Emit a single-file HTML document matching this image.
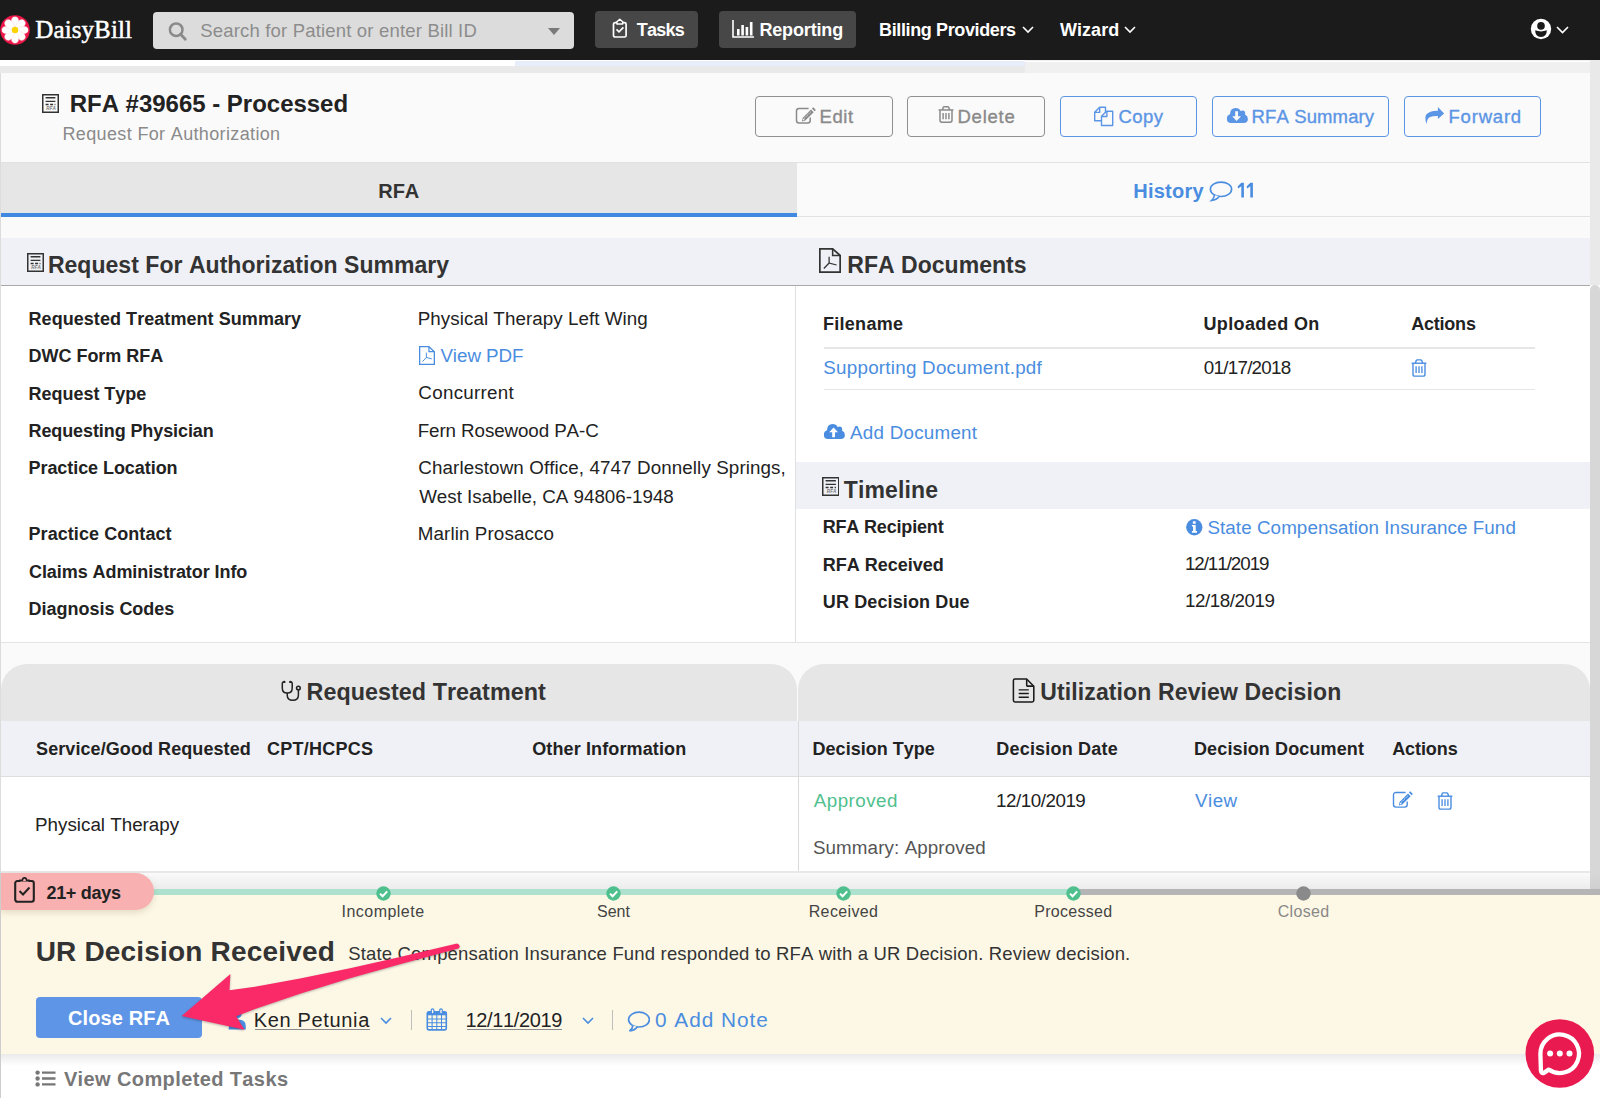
<!DOCTYPE html>
<html><head><meta charset="utf-8"><style>
html,body{margin:0;padding:0;}
body{width:1600px;height:1098px;position:relative;overflow:hidden;background:#fafafa;font-family:"Liberation Sans",sans-serif;font-kerning:none;}
.t{position:absolute;white-space:nowrap;}
.r{position:absolute;display:block;}
</style></head><body>
<div class="r" style="left:0px;top:0px;width:1600px;height:60px;background:#1b1b1b;"></div>
<svg class="r" style="left:0.3px;top:15.3px;" width="30" height="30" viewBox="0 0 30 30"><circle cx="15" cy="15" r="14.8" fill="#ec1648"/><path d="M15 15 C10.2 10 9.8 1.8 15 1.8 C20.2 1.8 19.8 10 15 15 Z" fill="#fff" stroke="#f6c9d3" stroke-width="0.35" transform="rotate(0 15 15)"/><path d="M15 15 C10.2 10 9.8 1.8 15 1.8 C20.2 1.8 19.8 10 15 15 Z" fill="#fff" stroke="#f6c9d3" stroke-width="0.35" transform="rotate(45 15 15)"/><path d="M15 15 C10.2 10 9.8 1.8 15 1.8 C20.2 1.8 19.8 10 15 15 Z" fill="#fff" stroke="#f6c9d3" stroke-width="0.35" transform="rotate(90 15 15)"/><path d="M15 15 C10.2 10 9.8 1.8 15 1.8 C20.2 1.8 19.8 10 15 15 Z" fill="#fff" stroke="#f6c9d3" stroke-width="0.35" transform="rotate(135 15 15)"/><path d="M15 15 C10.2 10 9.8 1.8 15 1.8 C20.2 1.8 19.8 10 15 15 Z" fill="#fff" stroke="#f6c9d3" stroke-width="0.35" transform="rotate(180 15 15)"/><path d="M15 15 C10.2 10 9.8 1.8 15 1.8 C20.2 1.8 19.8 10 15 15 Z" fill="#fff" stroke="#f6c9d3" stroke-width="0.35" transform="rotate(225 15 15)"/><path d="M15 15 C10.2 10 9.8 1.8 15 1.8 C20.2 1.8 19.8 10 15 15 Z" fill="#fff" stroke="#f6c9d3" stroke-width="0.35" transform="rotate(270 15 15)"/><path d="M15 15 C10.2 10 9.8 1.8 15 1.8 C20.2 1.8 19.8 10 15 15 Z" fill="#fff" stroke="#f6c9d3" stroke-width="0.35" transform="rotate(315 15 15)"/><circle cx="15" cy="15" r="3.2" fill="#fdd400"/></svg>
<div class="t" style="left:35.30px;top:17.00px;font-size:25px;line-height:25px;font-weight:normal;color:#fff;letter-spacing:0.100px;font-family:'Liberation Serif', serif;-webkit-text-stroke:0.5px #fff;">DaisyBill</div>
<div class="r" style="left:153px;top:12px;width:421px;height:37px;background:#dcdcdc;border-radius:4px;"></div>
<svg class="r" style="left:166px;top:19px;" width="24" height="24" viewBox="0 0 24 24"><circle cx="10.2" cy="10.7" r="6.3" fill="none" stroke="#8a8a8a" stroke-width="2.5"/><path d="M14.6 15.3 L19.3 20.2" stroke="#8a8a8a" stroke-width="2.8" stroke-linecap="round"/></svg>
<div class="t" style="left:200.20px;top:22.09px;font-size:18.5px;line-height:18.5px;font-weight:normal;color:#8c8c8c;letter-spacing:0.182px;font-family:'Liberation Sans', sans-serif;">Search for Patient or enter Bill ID</div>
<svg class="r" style="left:548px;top:28px;" width="12" height="7" viewBox="0 0 12 7"><path d="M0 0 H12 L6 7 Z" fill="#7a7a7a"/></svg>
<div class="r" style="left:595px;top:11px;width:103px;height:37px;background:#474747;border-radius:4px;"></div>
<svg class="r" style="left:612px;top:18px;" width="16" height="20" viewBox="0 0 16 20"><rect x="1.5" y="4.6" width="12.6" height="14.4" rx="1.6" fill="none" stroke="#fff" stroke-width="1.7"/><path d="M4.9 6 V3.8 L7.8 1.2 L10.7 3.8 V6 Z" fill="#474747" stroke="#fff" stroke-width="1.5" stroke-linejoin="round"/><path d="M4.5 11.4 L7 13.9 L11.4 9.3" fill="none" stroke="#fff" stroke-width="1.7"/></svg>
<div class="t" style="left:636.80px;top:20.51px;font-size:18px;line-height:18px;font-weight:bold;color:#fff;letter-spacing:-0.775px;font-family:'Liberation Sans', sans-serif;">Tasks</div>
<div class="r" style="left:719px;top:11px;width:137px;height:37px;background:#474747;border-radius:4px;"></div>
<svg class="r" style="left:732px;top:20px;" width="23" height="18" viewBox="0 0 23 18"><path d="M1 0 V17 H22" fill="none" stroke="#fff" stroke-width="1.6"/><rect x="5" y="9" width="2.6" height="6.5" fill="#fff"/><rect x="9.3" y="5" width="2.6" height="10.5" fill="#fff"/><rect x="13.6" y="7" width="2.6" height="8.5" fill="#fff"/><rect x="17.9" y="2" width="2.6" height="13.5" fill="#fff"/></svg>
<div class="t" style="left:759.40px;top:20.51px;font-size:18px;line-height:18px;font-weight:bold;color:#fff;letter-spacing:-0.150px;font-family:'Liberation Sans', sans-serif;">Reporting</div>
<div class="t" style="left:879.10px;top:20.51px;font-size:18px;line-height:18px;font-weight:bold;color:#fff;letter-spacing:-0.381px;font-family:'Liberation Sans', sans-serif;">Billing Providers</div>
<svg class="r" style="left:1022px;top:26px;" width="12" height="8" viewBox="0 0 12 8"><path d="M1 1 L6 6 L11 1" fill="none" stroke="#fff" stroke-width="1.6"/></svg>
<div class="t" style="left:1060.00px;top:20.51px;font-size:18px;line-height:18px;font-weight:bold;color:#fff;letter-spacing:0.040px;font-family:'Liberation Sans', sans-serif;">Wizard</div>
<svg class="r" style="left:1124px;top:26px;" width="12" height="8" viewBox="0 0 12 8"><path d="M1 1 L6 6 L11 1" fill="none" stroke="#fff" stroke-width="1.6"/></svg>
<svg class="r" style="left:1530px;top:18px;" width="22" height="22" viewBox="0 0 22 22"><circle cx="11" cy="11" r="10.2" fill="#fff"/><circle cx="11" cy="7.9" r="3.8" fill="#1b1b1b"/><path d="M5.2 12.3 Q11 14.6 16.8 12.3 Q16.9 18.9 11 18.9 Q5.1 18.9 5.2 12.3 Z" fill="#1b1b1b"/></svg>
<svg class="r" style="left:1556px;top:26px;" width="13" height="8" viewBox="0 0 13 8"><path d="M1 1 L6.5 6.5 L12 1" fill="none" stroke="#fff" stroke-width="1.6"/></svg>
<div class="r" style="left:0px;top:60px;width:1600px;height:13px;background:#f0f0f0;"></div>
<div class="r" style="left:0px;top:60px;width:1025px;height:6px;background:#ffffff;"></div>
<div class="r" style="left:515px;top:61px;width:510px;height:5px;background:#e7eefa;"></div>
<div class="r" style="left:0px;top:66px;width:1025px;height:7px;background:#e9e9e9;"></div>
<div class="r" style="left:1025px;top:61px;width:575px;height:1px;background:#ffffff;"></div>
<div class="r" style="left:0px;top:73px;width:1590px;height:816px;background:#fafafa;"></div>
<div class="r" style="left:0px;top:73px;width:1px;height:816px;background:#dcdcdc;"></div>
<div class="r" style="left:1590px;top:60px;width:10px;height:225px;background:#e9e9e9;"></div>
<div class="r" style="left:1590px;top:285px;width:10px;height:604px;background:#d7d7d7;border-radius:5px 5px 0 0;"></div>
<svg class="r" style="left:42px;top:94px;" width="17" height="19" viewBox="0 0 17 19"><rect x="0.75" y="0.75" width="15.5" height="17.5" fill="none" stroke="#333" stroke-width="1.5"/><path d="M3.6 3.8 H13.4 M3.6 7.4 H13.4" stroke="#333" stroke-width="1.4"/><path d="M3.6 10.5 H13.4" stroke="#333" stroke-width="1.3" stroke-dasharray="3 1.5"/><text x="13.8" y="15.8" font-size="4.6" font-weight="bold" font-style="italic" text-anchor="end" fill="#777" font-family="Liberation Sans">RFA</text></svg>
<div class="t" style="left:69.70px;top:92.31px;font-size:24px;line-height:24px;font-weight:bold;color:#222;letter-spacing:-0.019px;font-family:'Liberation Sans', sans-serif;">RFA #39665 - Processed</div>
<div class="t" style="left:62.50px;top:125.01px;font-size:18px;line-height:18px;font-weight:normal;color:#8a8a8a;letter-spacing:0.354px;font-family:'Liberation Sans', sans-serif;">Request For Authorization</div>
<div class="r" style="left:755px;top:96px;width:138px;height:41px;background:transparent;box-sizing:border-box;border:1.5px solid #8f8f8f;border-radius:4px;"></div>
<svg class="r" style="left:795px;top:107px;" width="21" height="17" viewBox="0 0 21 17"><path d="M13.6 1.5 H4 Q1.5 1.5 1.5 4 V13.6 Q1.5 16.1 4 16.1 H12.7 Q15.2 16.1 15.2 13.6 V10.6" fill="none" stroke="#8a8a8a" stroke-width="1.5"/><path d="M6.9 14.4 L7.6 10.9 L16 2.5 L18.7 5.2 L10.3 13.6 Z" fill="#8a8a8a"/><path d="M16.9 1.6 L18.2 0.3 L20.9 3 L19.6 4.3 Z" fill="#8a8a8a"/><path d="M9.2 11.4 L16.2 4.4" stroke="#fafafa" stroke-width="0.8" stroke-dasharray="1.2 0.8"/><circle cx="8.6" cy="12.6" r="0.8" fill="#fafafa"/></svg>
<div class="t" style="left:819.50px;top:107.59px;font-size:18.5px;line-height:18.5px;font-weight:normal;color:#8a8a8a;letter-spacing:0.600px;font-family:'Liberation Sans', sans-serif;-webkit-text-stroke:0.35px #8a8a8a;">Edit</div>
<div class="r" style="left:907px;top:96px;width:138px;height:41px;background:transparent;box-sizing:border-box;border:1.5px solid #8f8f8f;border-radius:4px;"></div>
<svg class="r" style="left:937.5px;top:106px;" width="16" height="17" viewBox="0 0 16 17"><g transform="scale(1.0000 0.9444)" fill="none" stroke="#8a8a8a" stroke-width="1.5" vector-effect="non-scaling-stroke"><path d="M0.6 4.2 H15.4" vector-effect="non-scaling-stroke"/><path d="M4.4 4.2 L5.2 1.6 Q5.5 0.9 6.3 0.9 H9.7 Q10.5 0.9 10.8 1.6 L11.6 4.2" vector-effect="non-scaling-stroke"/><path d="M2 4.2 V15.2 Q2 17.1 3.9 17.1 H12.1 Q14 17.1 14 15.2 V4.2" vector-effect="non-scaling-stroke"/><path d="M5.1 7.3 V14 M8 7.3 V14 M10.9 7.3 V14" vector-effect="non-scaling-stroke" stroke-width="1.4249999999999998"/></g></svg>
<div class="t" style="left:957.50px;top:107.59px;font-size:18.5px;line-height:18.5px;font-weight:normal;color:#8a8a8a;letter-spacing:0.760px;font-family:'Liberation Sans', sans-serif;-webkit-text-stroke:0.35px #8a8a8a;">Delete</div>
<div class="r" style="left:1060px;top:96px;width:137px;height:41px;background:transparent;box-sizing:border-box;border:1.5px solid #5b95e5;border-radius:4px;"></div>
<svg class="r" style="left:1090px;top:102px;" width="28" height="28" viewBox="0 0 28 28"><g fill="none" stroke="#5b95e5" stroke-width="1.4" stroke-linejoin="round"><path d="M9.7 5.2 H15.5 V10.2 M11.3 18.7 H4.7 V10.2 L9.7 5.2 V10.4 H4.7"/><path d="M16.5 9.3 H22.7 V23.5 H11.5 V14.3 Z"/><path d="M16.9 9.5 V14.5 H11.7"/></g></svg>
<div class="t" style="left:1118.50px;top:107.59px;font-size:18.5px;line-height:18.5px;font-weight:normal;color:#5b95e5;letter-spacing:0.467px;font-family:'Liberation Sans', sans-serif;-webkit-text-stroke:0.35px #5b95e5;">Copy</div>
<div class="r" style="left:1212px;top:96px;width:177px;height:41px;background:transparent;box-sizing:border-box;border:1.5px solid #5b95e5;border-radius:4px;"></div>
<svg class="r" style="left:1222px;top:102px;" width="30" height="28" viewBox="0 0 30 28"><path d="M9 21 Q4.9 21 4.9 16.7 Q4.9 13.3 8 12.3 Q8.3 6 13.6 6 Q17.2 6 18.8 9.2 Q19.6 8.5 20.6 8.5 Q23.2 8.5 23.2 11.4 L23 12.6 Q25.9 14 25.9 17 Q25.9 21 21.6 21 Z" fill="#5b95e5"/><path d="M13.2 9.3 H16 V14.3 H19 L14.6 19 L10.2 14.3 H13.2 Z" fill="#fafafa"/></svg>
<div class="t" style="left:1251.50px;top:107.59px;font-size:18.5px;line-height:18.5px;font-weight:normal;color:#5b95e5;letter-spacing:0.130px;font-family:'Liberation Sans', sans-serif;-webkit-text-stroke:0.35px #5b95e5;">RFA Summary</div>
<div class="r" style="left:1404px;top:96px;width:137px;height:41px;background:transparent;box-sizing:border-box;border:1.5px solid #5b95e5;border-radius:4px;"></div>
<svg class="r" style="left:1420px;top:102px;" width="30" height="28" viewBox="0 0 30 28"><path d="M17.9 8.8 Q9.5 8.6 6.3 12.6 Q4.3 15.5 6.5 22 Q7 16.8 9.6 15.2 Q12 14 17.9 14 V17 L24.1 11.4 L17.9 5 Z" fill="#5b95e5"/></svg>
<div class="t" style="left:1448.50px;top:107.59px;font-size:18.5px;line-height:18.5px;font-weight:normal;color:#5b95e5;letter-spacing:0.800px;font-family:'Liberation Sans', sans-serif;-webkit-text-stroke:0.35px #5b95e5;">Forward</div>
<div class="r" style="left:1px;top:162px;width:1589px;height:1px;background:#e2e2e2;"></div>
<div class="r" style="left:1px;top:163px;width:796px;height:50px;background:#e6e6e6;"></div>
<div class="r" style="left:1px;top:213px;width:796px;height:4px;background:#3f89e0;"></div>
<div class="r" style="left:797px;top:216px;width:793px;height:1px;background:#e2e2e2;"></div>
<div class="t" style="left:378.20px;top:180.94px;font-size:20px;line-height:20px;font-weight:bold;color:#333;letter-spacing:0.000px;font-family:'Liberation Sans', sans-serif;">RFA</div>
<div class="t" style="left:1133.20px;top:180.94px;font-size:20px;line-height:20px;font-weight:bold;color:#4a8de0;letter-spacing:0.250px;font-family:'Liberation Sans', sans-serif;">History</div>
<svg class="r" style="left:1209px;top:181px;" width="24" height="21" viewBox="0 0 24 21"><ellipse cx="12" cy="8.3" rx="10.6" ry="7.2" fill="none" stroke="#4a8de0" stroke-width="1.6"/><path d="M5.5 14 Q5 17.5 2.5 19.5 Q7.5 19 10 15.5" fill="#fafafa" stroke="#4a8de0" stroke-width="1.6"/></svg>
<svg class="r" style="left:1236px;top:182px;" width="18" height="16" viewBox="0 0 18 16"><path d="M5.3 0.8 H7.9 V15.6 H5.3 V4.2 L2.2 6.6 L1.6 4.6 Z M14.3 0.8 H16.9 V15.6 H14.3 V4.2 L11.2 6.6 L10.6 4.6 Z" fill="#4a8de0"/></svg>
<div class="r" style="left:1px;top:238px;width:1589px;height:47px;background:#f0f1f6;"></div>
<div class="r" style="left:1px;top:285px;width:1589px;height:1px;background:#a9a9a9;"></div>
<div class="r" style="left:1px;top:286px;width:1589px;height:356px;background:#ffffff;"></div>
<div class="r" style="left:795px;top:286px;width:1px;height:356px;background:#e0e0e0;"></div>
<div class="r" style="left:1px;top:642px;width:1589px;height:1px;background:#e3e3e3;"></div>
<svg class="r" style="left:26.5px;top:253px;" width="17" height="19" viewBox="0 0 17 19"><rect x="0.75" y="0.75" width="15.5" height="17.5" fill="none" stroke="#333" stroke-width="1.5"/><path d="M3.6 3.8 H13.4 M3.6 7.4 H13.4" stroke="#333" stroke-width="1.4"/><path d="M3.6 10.5 H13.4" stroke="#333" stroke-width="1.3" stroke-dasharray="3 1.5"/><text x="13.8" y="15.8" font-size="4.6" font-weight="bold" font-style="italic" text-anchor="end" fill="#777" font-family="Liberation Sans">RFA</text></svg>
<div class="t" style="left:47.90px;top:254.44px;font-size:23px;line-height:23px;font-weight:bold;color:#333;letter-spacing:0.038px;font-family:'Liberation Sans', sans-serif;">Request For Authorization Summary</div>
<svg class="r" style="left:819px;top:248px;" width="22" height="25" viewBox="0 0 22 25"><path d="M0.85 0.85 H13.64 L21.15 7.5 V24.15 H0.85 Z" fill="none" stroke="#333" stroke-width="1.7"/><path d="M13.64 0.85 V7.5 H21.15" fill="none" stroke="#333" stroke-width="1.53"/><path d="M4.84 20.5 L10.120000000000001 15.0 M10.120000000000001 8.75 V15.0 L17.6 17.0" fill="none" stroke="#333" stroke-width="1.275"/></svg>
<div class="t" style="left:847.30px;top:254.44px;font-size:23px;line-height:23px;font-weight:bold;color:#333;letter-spacing:0.025px;font-family:'Liberation Sans', sans-serif;">RFA Documents</div>
<div class="t" style="left:28.50px;top:310.41px;font-size:18px;line-height:18px;font-weight:bold;color:#222;letter-spacing:0.058px;font-family:'Liberation Sans', sans-serif;">Requested Treatment Summary</div>
<div class="t" style="left:28.50px;top:347.41px;font-size:18px;line-height:18px;font-weight:bold;color:#222;letter-spacing:-0.018px;font-family:'Liberation Sans', sans-serif;">DWC Form RFA</div>
<div class="t" style="left:28.50px;top:384.81px;font-size:18px;line-height:18px;font-weight:bold;color:#222;letter-spacing:-0.018px;font-family:'Liberation Sans', sans-serif;">Request Type</div>
<div class="t" style="left:28.50px;top:421.81px;font-size:18px;line-height:18px;font-weight:bold;color:#222;letter-spacing:-0.095px;font-family:'Liberation Sans', sans-serif;">Requesting Physician</div>
<div class="t" style="left:28.50px;top:458.71px;font-size:18px;line-height:18px;font-weight:bold;color:#222;letter-spacing:-0.062px;font-family:'Liberation Sans', sans-serif;">Practice Location</div>
<div class="t" style="left:28.50px;top:525.31px;font-size:18px;line-height:18px;font-weight:bold;color:#222;letter-spacing:0.067px;font-family:'Liberation Sans', sans-serif;">Practice Contact</div>
<div class="t" style="left:29.00px;top:562.71px;font-size:18px;line-height:18px;font-weight:bold;color:#222;letter-spacing:-0.071px;font-family:'Liberation Sans', sans-serif;">Claims Administrator Info</div>
<div class="t" style="left:28.50px;top:599.91px;font-size:18px;line-height:18px;font-weight:bold;color:#222;letter-spacing:-0.014px;font-family:'Liberation Sans', sans-serif;">Diagnosis Codes</div>
<div class="t" style="left:417.75px;top:310.14px;font-size:18.8px;line-height:18.8px;font-weight:normal;color:#222;letter-spacing:0.052px;font-family:'Liberation Sans', sans-serif;">Physical Therapy Left Wing</div>
<svg class="r" style="left:419px;top:346px;" width="16" height="19" viewBox="0 0 16 19"><path d="M0.65 0.65 H9.92 L15.35 5.7 V18.35 H0.65 Z" fill="none" stroke="#4a8de0" stroke-width="1.3"/><path d="M9.92 0.65 V5.7 H15.35" fill="none" stroke="#4a8de0" stroke-width="1.1700000000000002"/><path d="M3.52 15.579999999999998 L7.36 11.4 M7.36 6.6499999999999995 V11.4 L12.8 12.920000000000002" fill="none" stroke="#4a8de0" stroke-width="0.9750000000000001"/></svg>
<div class="t" style="left:440.40px;top:346.64px;font-size:18.8px;line-height:18.8px;font-weight:normal;color:#4a8de0;letter-spacing:-0.043px;font-family:'Liberation Sans', sans-serif;">View PDF</div>
<div class="t" style="left:418.35px;top:384.14px;font-size:18.8px;line-height:18.8px;font-weight:normal;color:#222;letter-spacing:0.278px;font-family:'Liberation Sans', sans-serif;">Concurrent</div>
<div class="t" style="left:417.75px;top:421.54px;font-size:18.8px;line-height:18.8px;font-weight:normal;color:#222;letter-spacing:-0.100px;font-family:'Liberation Sans', sans-serif;">Fern Rosewood PA-C</div>
<div class="t" style="left:418.35px;top:458.84px;font-size:18.8px;line-height:18.8px;font-weight:normal;color:#222;letter-spacing:0.102px;font-family:'Liberation Sans', sans-serif;">Charlestown Office, 4747 Donnelly Springs,</div>
<div class="t" style="left:419.15px;top:487.54px;font-size:18.8px;line-height:18.8px;font-weight:normal;color:#222;letter-spacing:-0.004px;font-family:'Liberation Sans', sans-serif;">West Isabelle, CA 94806-1948</div>
<div class="t" style="left:417.75px;top:525.34px;font-size:18.8px;line-height:18.8px;font-weight:normal;color:#222;letter-spacing:0.107px;font-family:'Liberation Sans', sans-serif;">Marlin Prosacco</div>
<div class="t" style="left:822.90px;top:315.01px;font-size:18px;line-height:18px;font-weight:bold;color:#222;letter-spacing:0.300px;font-family:'Liberation Sans', sans-serif;">Filename</div>
<div class="t" style="left:1203.40px;top:315.01px;font-size:18px;line-height:18px;font-weight:bold;color:#222;letter-spacing:0.390px;font-family:'Liberation Sans', sans-serif;">Uploaded On</div>
<div class="t" style="left:1411.20px;top:315.01px;font-size:18px;line-height:18px;font-weight:bold;color:#222;letter-spacing:-0.217px;font-family:'Liberation Sans', sans-serif;">Actions</div>
<div class="r" style="left:824px;top:347px;width:711px;height:2px;background:#e6e6e6;"></div>
<div class="t" style="left:823.30px;top:358.84px;font-size:18.8px;line-height:18.8px;font-weight:normal;color:#4a8de0;letter-spacing:0.250px;font-family:'Liberation Sans', sans-serif;">Supporting Document.pdf</div>
<div class="t" style="left:1203.80px;top:358.84px;font-size:18.8px;line-height:18.8px;font-weight:normal;color:#222;letter-spacing:-0.733px;font-family:'Liberation Sans', sans-serif;">01/17/2018</div>
<svg class="r" style="left:1411px;top:358.5px;" width="16" height="18" viewBox="0 0 16 18"><g transform="scale(1.0000 1.0000)" fill="none" stroke="#4a8de0" stroke-width="1.4" vector-effect="non-scaling-stroke"><path d="M0.6 4.2 H15.4" vector-effect="non-scaling-stroke"/><path d="M4.4 4.2 L5.2 1.6 Q5.5 0.9 6.3 0.9 H9.7 Q10.5 0.9 10.8 1.6 L11.6 4.2" vector-effect="non-scaling-stroke"/><path d="M2 4.2 V15.2 Q2 17.1 3.9 17.1 H12.1 Q14 17.1 14 15.2 V4.2" vector-effect="non-scaling-stroke"/><path d="M5.1 7.3 V14 M8 7.3 V14 M10.9 7.3 V14" vector-effect="non-scaling-stroke" stroke-width="1.3299999999999998"/></g></svg>
<div class="r" style="left:824px;top:389px;width:711px;height:1px;background:#e6e6e6;"></div>
<svg class="r" style="left:819px;top:418px;" width="30" height="28" viewBox="0 0 30 28"><path d="M9 21 Q4.9 21 4.9 16.7 Q4.9 13.3 8 12.3 Q8.3 6 13.6 6 Q17.2 6 18.8 9.2 Q19.6 8.5 20.6 8.5 Q23.2 8.5 23.2 11.4 L23 12.6 Q25.9 14 25.9 17 Q25.9 21 21.6 21 Z" fill="#4a8de0"/><path d="M13.2 19.2 H16 V14.2 H19 L14.6 9.5 L10.2 14.2 H13.2 Z" fill="#ffffff"/></svg>
<div class="t" style="left:850.00px;top:424.14px;font-size:18.8px;line-height:18.8px;font-weight:normal;color:#4a8de0;letter-spacing:0.255px;font-family:'Liberation Sans', sans-serif;">Add Document</div>
<div class="r" style="left:796px;top:462px;width:794px;height:47px;background:#f0f1f6;"></div>
<svg class="r" style="left:821.5px;top:477px;" width="17.5" height="19" viewBox="0 0 17.5 19"><rect x="0.75" y="0.75" width="16.0" height="17.5" fill="none" stroke="#333" stroke-width="1.5"/><path d="M3.6 3.8 H13.9 M3.6 7.4 H13.9" stroke="#333" stroke-width="1.4"/><path d="M3.6 10.5 H13.9" stroke="#333" stroke-width="1.3" stroke-dasharray="3 1.5"/><text x="14.3" y="15.8" font-size="4.6" font-weight="bold" font-style="italic" text-anchor="end" fill="#777" font-family="Liberation Sans">RFA</text></svg>
<div class="t" style="left:843.80px;top:478.84px;font-size:23px;line-height:23px;font-weight:bold;color:#333;letter-spacing:0.143px;font-family:'Liberation Sans', sans-serif;">Timeline</div>
<div class="t" style="left:822.70px;top:518.41px;font-size:18px;line-height:18px;font-weight:bold;color:#222;letter-spacing:-0.167px;font-family:'Liberation Sans', sans-serif;">RFA Recipient</div>
<div class="t" style="left:822.70px;top:555.71px;font-size:18px;line-height:18px;font-weight:bold;color:#222;letter-spacing:-0.009px;font-family:'Liberation Sans', sans-serif;">RFA Received</div>
<div class="t" style="left:822.80px;top:592.61px;font-size:18px;line-height:18px;font-weight:bold;color:#222;letter-spacing:0.121px;font-family:'Liberation Sans', sans-serif;">UR Decision Due</div>
<svg class="r" style="left:1186px;top:518.5px;" width="17" height="17" viewBox="0 0 17 17"><circle cx="8.3" cy="8.25" r="8.15" fill="#4a8de0"/><rect x="6.8" y="2.3" width="2.9" height="2.5" rx="0.6" fill="#fff"/><path d="M5.9 5.9 H9.7 V12.1 H11 V13.8 H5.9 V12.1 H7.1 V7.4 H5.9 Z" fill="#fff"/></svg>
<div class="t" style="left:1207.45px;top:518.54px;font-size:18.8px;line-height:18.8px;font-weight:normal;color:#4a8de0;letter-spacing:0.078px;font-family:'Liberation Sans', sans-serif;">State Compensation Insurance Fund</div>
<div class="t" style="left:1184.90px;top:555.24px;font-size:18.8px;line-height:18.8px;font-weight:normal;color:#222;letter-spacing:-1.044px;font-family:'Liberation Sans', sans-serif;">12/11/2019</div>
<div class="t" style="left:1184.90px;top:592.14px;font-size:18.8px;line-height:18.8px;font-weight:normal;color:#222;letter-spacing:-0.444px;font-family:'Liberation Sans', sans-serif;">12/18/2019</div>
<div class="r" style="left:1px;top:664px;width:796px;height:57px;background:#e6e6e6;border-radius:26px 26px 0 0;"></div>
<div class="r" style="left:798px;top:664px;width:792px;height:57px;background:#e6e6e6;border-radius:26px 26px 0 0;"></div>
<svg class="r" style="left:270px;top:670px;" width="40" height="40" viewBox="0 0 40 40"><g fill="none" stroke="#222" stroke-width="1.5"><path d="M14.2 11.7 Q12.3 11.7 12.3 13.5 V18 Q12.3 23.1 17.25 23.1 Q22.2 23.1 22.2 18 V13.5 Q22.2 11.7 20.3 11.7"/><path d="M17.25 23.1 V25.3 Q17.25 30.3 22.8 30.3 Q28.4 30.3 28.4 25 V19.9"/><circle cx="28.4" cy="18" r="1.85"/></g><circle cx="14.3" cy="11.9" r="1.2" fill="#222"/><circle cx="20.3" cy="11.9" r="1.2" fill="#222"/></svg>
<div class="t" style="left:306.50px;top:680.79px;font-size:23.3px;line-height:23.3px;font-weight:bold;color:#333;letter-spacing:0.056px;font-family:'Liberation Sans', sans-serif;">Requested Treatment</div>
<svg class="r" style="left:1012px;top:678px;" width="23" height="25" viewBox="0 0 23 25"><g fill="none" stroke="#1a1a1a" stroke-width="1.55"><path d="M3 1 H14.6 L21.8 8.2 V22.3 Q21.8 24 20.1 24 H3 Q1.4 24 1.4 22.3 V2.6 Q1.4 1 3 1 Z"/><path d="M14.7 1.2 V7.3 Q14.7 8.1 15.5 8.1 H21.6"/><path d="M6.7 11.9 H16.8 M6.7 15.5 H16.8 M6.7 19.2 H16.8" stroke-width="1.4"/></g></svg>
<div class="t" style="left:1040.20px;top:681.04px;font-size:23px;line-height:23px;font-weight:bold;color:#333;letter-spacing:0.127px;font-family:'Liberation Sans', sans-serif;">Utilization Review Decision</div>
<div class="r" style="left:1px;top:721px;width:1589px;height:55px;background:#f0f1f6;"></div>
<div class="r" style="left:1px;top:776px;width:1589px;height:1px;background:#dedede;"></div>
<div class="r" style="left:1px;top:777px;width:1589px;height:94px;background:#ffffff;"></div>
<div class="r" style="left:798px;top:721px;width:1px;height:150px;background:#dadada;"></div>
<div class="r" style="left:1px;top:871px;width:1589px;height:2px;background:#e8e8e8;"></div>
<div class="t" style="left:36.10px;top:740.21px;font-size:18px;line-height:18px;font-weight:bold;color:#222;letter-spacing:0.076px;font-family:'Liberation Sans', sans-serif;">Service/Good Requested</div>
<div class="t" style="left:266.90px;top:740.21px;font-size:18px;line-height:18px;font-weight:bold;color:#222;letter-spacing:0.275px;font-family:'Liberation Sans', sans-serif;">CPT/HCPCS</div>
<div class="t" style="left:532.20px;top:740.21px;font-size:18px;line-height:18px;font-weight:bold;color:#222;letter-spacing:0.125px;font-family:'Liberation Sans', sans-serif;">Other Information</div>
<div class="t" style="left:812.55px;top:740.21px;font-size:18px;line-height:18px;font-weight:bold;color:#222;letter-spacing:0.025px;font-family:'Liberation Sans', sans-serif;">Decision Type</div>
<div class="t" style="left:996.30px;top:740.21px;font-size:18px;line-height:18px;font-weight:bold;color:#222;letter-spacing:0.192px;font-family:'Liberation Sans', sans-serif;">Decision Date</div>
<div class="t" style="left:1194.00px;top:740.21px;font-size:18px;line-height:18px;font-weight:bold;color:#222;letter-spacing:0.119px;font-family:'Liberation Sans', sans-serif;">Decision Document</div>
<div class="t" style="left:1392.20px;top:740.21px;font-size:18px;line-height:18px;font-weight:bold;color:#222;letter-spacing:-0.083px;font-family:'Liberation Sans', sans-serif;">Actions</div>
<div class="t" style="left:35.10px;top:815.74px;font-size:18.8px;line-height:18.8px;font-weight:normal;color:#222;letter-spacing:0.000px;font-family:'Liberation Sans', sans-serif;">Physical Therapy</div>
<div class="t" style="left:813.75px;top:792.04px;font-size:18.8px;line-height:18.8px;font-weight:normal;color:#4fc08d;letter-spacing:0.457px;font-family:'Liberation Sans', sans-serif;">Approved</div>
<div class="t" style="left:996.10px;top:792.04px;font-size:18.8px;line-height:18.8px;font-weight:normal;color:#222;letter-spacing:-0.478px;font-family:'Liberation Sans', sans-serif;">12/10/2019</div>
<div class="t" style="left:1195.10px;top:792.04px;font-size:18.8px;line-height:18.8px;font-weight:normal;color:#4a8de0;letter-spacing:0.433px;font-family:'Liberation Sans', sans-serif;">View</div>
<svg class="r" style="left:1392px;top:791px;" width="21" height="17" viewBox="0 0 21 17"><path d="M13.6 1.5 H4 Q1.5 1.5 1.5 4 V13.6 Q1.5 16.1 4 16.1 H12.7 Q15.2 16.1 15.2 13.6 V10.6" fill="none" stroke="#4a8de0" stroke-width="1.4"/><path d="M6.9 14.4 L7.6 10.9 L16 2.5 L18.7 5.2 L10.3 13.6 Z" fill="#4a8de0"/><path d="M16.9 1.6 L18.2 0.3 L20.9 3 L19.6 4.3 Z" fill="#4a8de0"/><path d="M9.2 11.4 L16.2 4.4" stroke="#ffffff" stroke-width="0.8" stroke-dasharray="1.2 0.8"/><circle cx="8.6" cy="12.6" r="0.8" fill="#ffffff"/></svg>
<svg class="r" style="left:1436.5px;top:791.5px;" width="16" height="18" viewBox="0 0 16 18"><g transform="scale(1.0000 1.0000)" fill="none" stroke="#4a8de0" stroke-width="1.4" vector-effect="non-scaling-stroke"><path d="M0.6 4.2 H15.4" vector-effect="non-scaling-stroke"/><path d="M4.4 4.2 L5.2 1.6 Q5.5 0.9 6.3 0.9 H9.7 Q10.5 0.9 10.8 1.6 L11.6 4.2" vector-effect="non-scaling-stroke"/><path d="M2 4.2 V15.2 Q2 17.1 3.9 17.1 H12.1 Q14 17.1 14 15.2 V4.2" vector-effect="non-scaling-stroke"/><path d="M5.1 7.3 V14 M8 7.3 V14 M10.9 7.3 V14" vector-effect="non-scaling-stroke" stroke-width="1.3299999999999998"/></g></svg>
<div class="t" style="left:812.95px;top:838.84px;font-size:18.8px;line-height:18.8px;font-weight:normal;color:#555;letter-spacing:0.100px;font-family:'Liberation Sans', sans-serif;">Summary: Approved</div>
<div class="r" style="left:0px;top:873px;width:1600px;height:16px;background:linear-gradient(#fafafa,#ececec);"></div>
<div class="r" style="left:1590px;top:873px;width:10px;height:16px;background:linear-gradient(#d7d7d7,#cfcfcf);"></div>
<div class="r" style="left:0px;top:1053px;width:1600px;height:45px;background:#ffffff;"></div>
<div class="r" style="left:0px;top:1053px;width:1600px;height:13px;background:linear-gradient(#e9e9e9,#ffffff);"></div>
<div class="r" style="left:0px;top:889px;width:1600px;height:165px;background:#fdf8e6;"></div>
<div class="r" style="left:0px;top:889px;width:1073px;height:6px;background:#aee2cf;"></div>
<div class="r" style="left:1073px;top:889px;width:527px;height:6px;background:#b5b5b5;"></div>
<div class="r" style="left:0px;top:873px;width:153.5px;height:37px;background:#f9b0b0;border-radius:0 18.5px 18.5px 0;box-shadow:0 3px 6px rgba(120,100,60,0.18);"></div>
<svg class="r" style="left:14px;top:877px;" width="21" height="26" viewBox="0 0 21 26"><rect x="1.2" y="4" width="18.6" height="20.8" rx="2.2" fill="none" stroke="#222" stroke-width="2.1"/><path d="M6 4.5 V3.2 H8.4 Q8.6 0.9 10.5 0.9 Q12.4 0.9 12.6 3.2 H15 V4.5" fill="#f9b0b0" stroke="#222" stroke-width="1.6"/><path d="M5.5 14 L9 17.5 L15.5 10.5" fill="none" stroke="#222" stroke-width="2"/></svg>
<div class="t" style="left:46.40px;top:884.01px;font-size:18px;line-height:18px;font-weight:bold;color:#222;letter-spacing:-0.271px;font-family:'Liberation Sans', sans-serif;">21+ days</div>
<svg class="r" style="left:376.1px;top:885.5px;" width="15" height="15" viewBox="0 0 15 15"><circle cx="7.5" cy="7.5" r="7.2" fill="#4fc08d"/><path d="M4 7.6 L6.6 10.2 L11.2 5.4" fill="none" stroke="#fff" stroke-width="2"/></svg>
<svg class="r" style="left:605.9px;top:885.5px;" width="15" height="15" viewBox="0 0 15 15"><circle cx="7.5" cy="7.5" r="7.2" fill="#4fc08d"/><path d="M4 7.6 L6.6 10.2 L11.2 5.4" fill="none" stroke="#fff" stroke-width="2"/></svg>
<svg class="r" style="left:835.7px;top:885.5px;" width="15" height="15" viewBox="0 0 15 15"><circle cx="7.5" cy="7.5" r="7.2" fill="#4fc08d"/><path d="M4 7.6 L6.6 10.2 L11.2 5.4" fill="none" stroke="#fff" stroke-width="2"/></svg>
<svg class="r" style="left:1065.9px;top:885.5px;" width="15" height="15" viewBox="0 0 15 15"><circle cx="7.5" cy="7.5" r="7.2" fill="#4fc08d"/><path d="M4 7.6 L6.6 10.2 L11.2 5.4" fill="none" stroke="#fff" stroke-width="2"/></svg>
<svg class="r" style="left:1296.0px;top:885.5px;" width="15" height="15" viewBox="0 0 15 15"><circle cx="7.5" cy="7.5" r="7.2" fill="#8a8a8a"/></svg>
<div class="t" style="left:341.50px;top:903.87px;font-size:16px;line-height:16px;font-weight:normal;color:#444;letter-spacing:0.478px;font-family:'Liberation Sans', sans-serif;">Incomplete</div>
<div class="t" style="left:596.90px;top:903.87px;font-size:16px;line-height:16px;font-weight:normal;color:#444;letter-spacing:0.067px;font-family:'Liberation Sans', sans-serif;">Sent</div>
<div class="t" style="left:808.70px;top:903.87px;font-size:16px;line-height:16px;font-weight:normal;color:#444;letter-spacing:0.371px;font-family:'Liberation Sans', sans-serif;">Received</div>
<div class="t" style="left:1034.30px;top:903.87px;font-size:16px;line-height:16px;font-weight:normal;color:#444;letter-spacing:0.287px;font-family:'Liberation Sans', sans-serif;">Processed</div>
<div class="t" style="left:1277.70px;top:903.87px;font-size:16px;line-height:16px;font-weight:normal;color:#888;letter-spacing:0.320px;font-family:'Liberation Sans', sans-serif;">Closed</div>
<div class="t" style="left:35.70px;top:937.68px;font-size:28px;line-height:28px;font-weight:bold;color:#333;letter-spacing:0.179px;font-family:'Liberation Sans', sans-serif;">UR Decision Received</div>
<div class="t" style="left:348.20px;top:944.89px;font-size:18.5px;line-height:18.5px;font-weight:normal;color:#333;letter-spacing:0.174px;font-family:'Liberation Sans', sans-serif;">State Compensation Insurance Fund responded to RFA with a UR Decision. Review decision.</div>
<div class="r" style="left:36px;top:997px;width:166px;height:41px;background:#5f95e6;border-radius:4px;"></div>
<div class="t" style="left:67.95px;top:1008.34px;font-size:20px;line-height:20px;font-weight:bold;color:#fff;letter-spacing:0.119px;font-family:'Liberation Sans', sans-serif;">Close RFA</div>
<svg class="r" style="left:225px;top:1005px;" width="25" height="28" viewBox="0 0 25 28"><circle cx="12.2" cy="8.8" r="4.6" fill="#4a8de0"/><path d="M3.5 24.5 Q3.5 14.5 13.5 14.5 Q20.8 14.5 20.8 21 V24.5 Z" fill="#4a8de0"/></svg>
<div class="t" style="left:253.70px;top:1010.34px;font-size:20px;line-height:20px;font-weight:normal;color:#222;letter-spacing:0.660px;font-family:'Liberation Sans', sans-serif;">Ken Petunia</div>
<div class="r" style="left:255px;top:1029px;width:115px;height:1px;background:#8a8a8a;"></div>
<svg class="r" style="left:380px;top:1017px;" width="12" height="8" viewBox="0 0 12 8"><path d="M1 1 L6 6 L11 1" fill="none" stroke="#4a8de0" stroke-width="1.6"/></svg>
<div class="r" style="left:411px;top:1010px;width:1.1999999999999886px;height:20px;background:#bdbdbd;"></div>
<svg class="r" style="left:426px;top:1008px;" width="22" height="23" viewBox="0 0 22 23"><rect x="1.3" y="3.9" width="19" height="18" rx="1.8" fill="none" stroke="#4a8de0" stroke-width="1.6"/><rect x="1.3" y="3.9" width="19" height="3.4" fill="#4a8de0"/><rect x="5.3" y="0.9" width="2.6" height="5" rx="1.3" fill="#fdf8e6" stroke="#4a8de0" stroke-width="1.2"/><rect x="13.7" y="0.9" width="2.6" height="5" rx="1.3" fill="#fdf8e6" stroke="#4a8de0" stroke-width="1.2"/><path d="M1.3 11 H20.3 M1.3 14.7 H20.3 M1.3 18.4 H20.3 M6.1 7 V21.9 M10.8 7 V21.9 M15.5 7 V21.9" stroke="#4a8de0" stroke-width="1.05"/></svg>
<div class="t" style="left:465.50px;top:1010.34px;font-size:20px;line-height:20px;font-weight:normal;color:#222;letter-spacing:-0.356px;font-family:'Liberation Sans', sans-serif;">12/11/2019</div>
<div class="r" style="left:467px;top:1029px;width:95px;height:1px;background:#8a8a8a;"></div>
<svg class="r" style="left:582px;top:1017px;" width="12" height="8" viewBox="0 0 12 8"><path d="M1 1 L6 6 L11 1" fill="none" stroke="#4a8de0" stroke-width="1.6"/></svg>
<div class="r" style="left:611.5px;top:1010px;width:1.2000000000000455px;height:20px;background:#bdbdbd;"></div>
<svg class="r" style="left:627px;top:1011px;" width="23" height="21" viewBox="0 0 23 21"><ellipse cx="12" cy="8.6" rx="10.4" ry="7.4" fill="none" stroke="#4a8de0" stroke-width="1.7"/><path d="M5.8 14.5 Q5.5 18 2.5 20 Q8 19.5 10.3 15.8" fill="#fdf8e6" stroke="#4a8de0" stroke-width="1.7"/></svg>
<div class="t" style="left:655.10px;top:1009.67px;font-size:20.8px;line-height:20.8px;font-weight:normal;color:#4a8de0;letter-spacing:0.956px;font-family:'Liberation Sans', sans-serif;">0 Add Note</div>
<svg class="r" style="left:35px;top:1070px;" width="21" height="17" viewBox="0 0 21 17"><circle cx="2.6" cy="2.6" r="2.2" fill="#777"/><circle cx="2.6" cy="8.5" r="2.2" fill="#777"/><circle cx="2.6" cy="14.4" r="2.2" fill="#777"/><path d="M7 2.6 H20.5 M7 8.5 H20.5 M7 14.4 H20.5" stroke="#777" stroke-width="2.4"/></svg>
<div class="t" style="left:63.90px;top:1068.94px;font-size:20px;line-height:20px;font-weight:bold;color:#777;letter-spacing:0.389px;font-family:'Liberation Sans', sans-serif;">View Completed Tasks</div>
<svg class="r" style="left:170px;top:930px;filter:drop-shadow(0.8px 1.5px 1.2px rgba(0,0,0,0.28));" width="300" height="110" viewBox="0 0 300 110"><path d="M59.5 60.2 L85.0 56.7 L130.0 48.4 L180.0 38.2 L230.0 27.1 L287.0 13.5 Q291.5 15.3 288.5 18.6 L230.0 34.3 L180.0 48.3 L130.0 63.8 L85.0 79.0 L66.2 86.3 L74.5 99.7 L11.7 86.0 L60.4 43.9 Z" fill="#fa2a69"/></svg>
<svg class="r" style="left:1525px;top:1019px;" width="70" height="70" viewBox="0 0 70 70"><circle cx="34.8" cy="34.5" r="34.3" fill="#e91a4f"/><path d="M15.4 34.8 A19.3 19.3 0 1 1 23.7 50.6 L19.3 53.6 Q16.3 55.4 15.9 51.6 Z" fill="none" stroke="#fff" stroke-width="4.3" stroke-linejoin="round"/><circle cx="25.1" cy="34.6" r="3" fill="#fff"/><circle cx="34.8" cy="34.6" r="3" fill="#fff"/><circle cx="44.5" cy="34.6" r="3" fill="#fff"/></svg>
<div class="r" style="left:0px;top:873px;width:1px;height:225px;background:#cdcdcd;"></div>
</body></html>
